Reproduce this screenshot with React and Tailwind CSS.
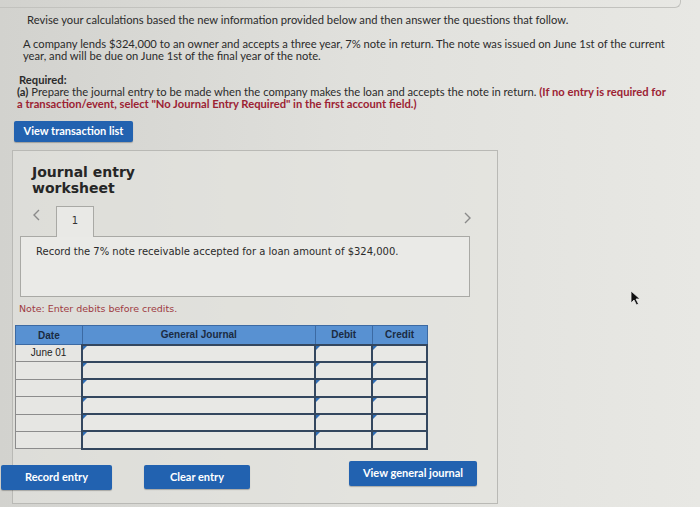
import React from "react";

const lato = { fontFamily: "Lato, 'Liberation Sans', sans-serif" };
const verdana = { fontFamily: "'DejaVu Sans', Verdana, sans-serif" };
const arial = { fontFamily: "'Liberation Sans', Arial, sans-serif" };

function BlueButton({ className = "", children }) {
  return (
    <button
      className={
        "flex items-center justify-center rounded-[2px] bg-[#2262b0] text-[11px] font-bold text-white shadow-[0_1px_1px_rgba(0,0,0,0.25)] " +
        className
      }
      style={lato}
    >
      {children}
    </button>
  );
}

function Marker() {
  return <div className="h-0 w-0 border-b-[4px] border-l-[4px] border-b-transparent border-l-[#2f6db5]" />;
}

function Chevron({ left }) {
  return (
    <svg width="9" height="12" viewBox="0 0 9 12" fill="none" stroke="#8a8a8a" strokeWidth="1.4">
      <polyline points={left ? "7,1 2,6 7,11" : "2,1 7,6 2,11"} />
    </svg>
  );
}

const rows = ["June 01", "", "", "", "", ""];

export default function App() {
  return (
    <div
      className="relative h-[507px] w-[700px] overflow-hidden bg-gradient-to-r from-[#d2d2ce] via-[#e0e0dc] to-[#e8e8e4] text-[#2b2b2b]"
      style={lato}
    >
      <div className="h-[8px] w-[681px] rounded-br-md border-b border-r border-[#c2c2be]" />

      <p className="ml-[27px] mt-[6px] text-[11.2px] leading-[12px]">
        Revise your calculations based the new information provided below and then answer the questions that follow.
      </p>
      <p className="ml-[23px] mr-[24px] mt-[12px] text-[11.2px] leading-[12px]">
        A company lends $324,000 to an owner and accepts a three year, 7% note in return. The note was issued on June 1st of the current
        year, and will be due on June 1st of the final year of the note.
      </p>
      <p className="ml-[19px] mt-[12px] text-[11.2px] font-bold leading-[12px]">Required:</p>
      <p className="ml-[17px] text-[11.2px] leading-[12px]">
        <span className="font-bold">(a)</span> Prepare the journal entry to be made when the company makes the loan and accepts the
        note in return.{" "}
        <span className="font-bold text-[#9c2233]">
          (If no entry is required for
          <br />
          a transaction/event, select "No Journal Entry Required" in the first account field.)
        </span>
      </p>

      <BlueButton className="ml-[14px] mt-[11px] h-[21px] w-[119px] text-[10px]">View transaction list</BlueButton>

      <div className="ml-[12px] mt-[8px] w-[486px] border border-[#b9b9b5] bg-[#e4e4e0]/60 pb-[13px]">
        <h2 className="ml-[19px] mt-[13px] text-[14px] font-bold leading-[16px] text-[#262626]" style={verdana}>
          Journal entry
          <br />
          worksheet
        </h2>

        <div className="ml-[7px] mt-[10px] flex w-[452px] items-end justify-between">
          <div className="flex items-end">
            <div className="mb-[15px] ml-[12px]">
              <Chevron left />
            </div>
            <div
              className="-mb-px ml-[15px] flex h-[31px] w-[38px] justify-center border border-b-0 border-[#a9a9a5] bg-[#e9e9e6] pt-[6px] text-[10px] text-[#333]"
              style={verdana}
            >
              1
            </div>
          </div>
          <div className="mb-[12px]">
            <Chevron />
          </div>
        </div>

        <div className="ml-[7px] h-[61px] w-[450px] border border-[#a9a9a5] bg-[#eaeae7] pl-[15px] pt-[9px]">
          <p className="text-[10px] leading-[12px] text-[#2a2a2a]" style={verdana}>
            Record the 7% note receivable accepted for a loan amount of $324,000.
          </p>
        </div>

        <p className="ml-[6px] mt-[6px] text-[9.5px] leading-[12px] text-[#9e3a42]" style={verdana}>
          Note: Enter debits before credits.
        </p>

        <table className="ml-[2px] mt-[10px] w-[413px] border-collapse" style={arial}>
          <thead>
            <tr className="h-[19px] bg-[#5891d2] text-[10px] font-bold text-[#1b2b42]">
              <th className="w-[67px] border border-[#3c6aa3] font-bold">Date</th>
              <th className="w-[234px] border border-[#3c6aa3] font-bold">General Journal</th>
              <th className="w-[57px] border border-[#3c6aa3] font-bold">Debit</th>
              <th className="w-[55px] border border-[#3c6aa3] font-bold">Credit</th>
            </tr>
          </thead>
          <tbody>
            {rows.map((d, i) => (
              <tr key={i} className="h-[17.4px]">
                <td className="border border-[#8c8c8c] bg-[#e6e6e3] text-center align-top text-[10px] leading-[15px] text-[#222]">
                  {d}
                </td>
                <td className="border-2 border-[#34475f] bg-[#e8e8e5] p-0 align-top">
                  <Marker />
                </td>
                <td className="border-2 border-[#34475f] bg-[#e8e8e5] p-0 align-top">
                  <Marker />
                </td>
                <td className="border-2 border-[#34475f] bg-[#e8e8e5] p-0 align-top">
                  <Marker />
                </td>
              </tr>
            ))}
          </tbody>
        </table>

        <div className="-ml-[12px] mt-[11px] flex items-start">
          <BlueButton className="mt-[4px] h-[25px] w-[111px]">Record entry</BlueButton>
          <BlueButton className="ml-[32px] mt-[4px] h-[24px] w-[106px]">Clear entry</BlueButton>
          <BlueButton className="ml-[99px] h-[25px] w-[128px]">View general journal</BlueButton>
        </div>
      </div>

      <svg className="absolute left-[630px] top-[290px]" width="11" height="16" viewBox="0 0 11 16">
        <path d="M1 1 L1 13 L4 10 L6.5 15 L8.5 14 L6 9 L10 9 Z" fill="#111" stroke="#eee" strokeWidth="0.8" />
      </svg>
    </div>
  );
}
